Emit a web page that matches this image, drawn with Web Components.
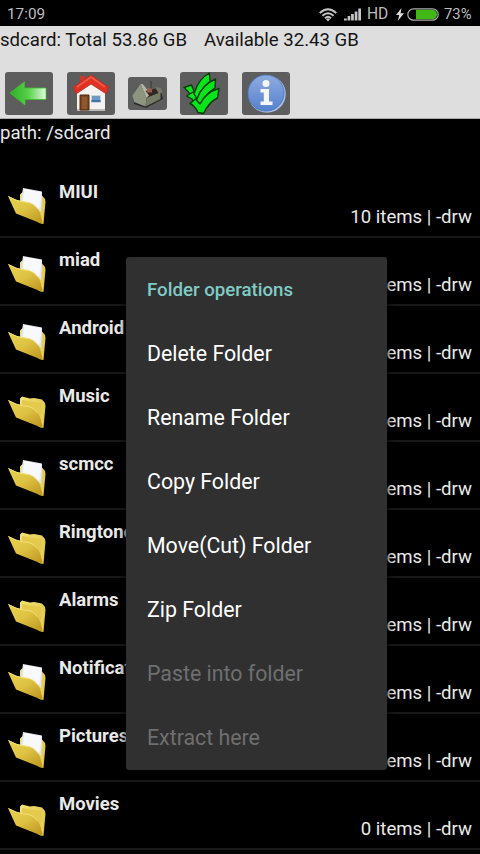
<!DOCTYPE html>
<html lang="en">
<head>
<meta charset="utf-8">
<title>File manager</title>
<style>
html,body{margin:0;background:#000}
body{width:480px;height:854px;overflow:hidden;font-family:Roboto,"Noto Sans",sans-serif}
</style>
</head>
<body>
<file-app></file-app>
<script>
const define=(name,render)=>customElements.define(name,class extends HTMLElement{
  connectedCallback(){
    if(this.shadowRoot)return;
    const t=document.createElement('template');
    t.innerHTML=render(this);
    this.attachShadow({mode:'open'}).append(t.content.cloneNode(true));
  }
});

define('status-bar',()=>`
<style>
:host{display:flex;align-items:center;box-sizing:border-box;height:26px;padding:3px 8px 0 7px;background:#000;color:#bdbdbd;font-size:15.3px;line-height:23px}
.time{flex:1}
svg{display:block;flex:none}
.wifi{margin-right:7px}.sig{margin-right:5px}.bolt{margin:0 3px 0 8px}.bat{margin-right:5px}
.hd{font-size:15.6px;width:21px}.pct{font-size:14.8px;width:28px;white-space:nowrap}
</style>
<span class="time">17:09</span>
<svg class="wifi" width="18" height="14" viewBox="0 0 18 14"><g fill="none" stroke="#c4c4c4" stroke-width="1.9"><path d="M.7 5Q9-2.6 17.3 5"/><path d="M3.4 7.8Q9 2.5 14.6 7.8"/><path d="M5.9 10.3Q9 7.2 12.1 10.3"/></g><path d="M7 11.2Q9 9.4 11 11.2L9 13.4Z" fill="#c4c4c4"/></svg>
<svg class="sig" width="18" height="13" viewBox="0 0 18 13"><g fill="#c4c4c4"><path d="M0 10.4h2.8v2.1H0zM3.6 8h2.7v4.5H3.6zM7.1 6h2.7v6.5H7.1zM10.7 3.4h2.7v9.1h-2.7zM14.3 .4h2.7v12.1h-2.7z"/></g></svg>
<span class="hd">HD</span>
<svg class="bolt" width="8" height="13" viewBox="0 0 8 13"><path d="M5.5 0 0 7.1h3.2L1.8 13 8 5.2H4.6Z" fill="#ddd"/></svg>
<svg class="bat" width="32" height="13" viewBox="0 0 32 13"><rect x=".8" y=".8" width="30.4" height="11.4" rx="5.7" fill="#050505" stroke="#aaa" stroke-width="1.2"/><path d="M9 1.8h16.3a4.7 4.7 0 0 1 0 9.4H9Z" fill="#42b817"/></svg>
<span class="pct">73%</span>`);

define('tool-button',()=>`
<style>
:host{display:flex;align-items:center;justify-content:center;width:48px;height:43px;border-radius:3px;background:#5d5d5d}
:host([small]){width:39px;height:33px}
</style><slot></slot>`);

define('storage-header',()=>`
<style>
:host{display:block;box-sizing:border-box;height:93px;background:#dedede;color:#151515;border-bottom:1px solid #aaa}
.info{height:46px;font-size:18.6px;line-height:29px;white-space:pre}
.bar{display:flex;align-items:center;padding-left:5px;height:43px}
tool-button+tool-button{margin-left:13px}
tool-button:nth-child(2),tool-button:nth-child(5){margin-left:14px}
svg{display:block}
</style>
<div class="info">sdcard: Total 53.86 GB<span style="margin-left:17px">Available 32.43 GB</span></div>
<div class="bar">
<tool-button><svg width="48" height="43" viewBox="0 0 48 43"><defs><linearGradient id="ar"><stop stop-color="#2fae26"/><stop offset=".5" stop-color="#55d148"/><stop offset="1" stop-color="#e2fae0"/></linearGradient></defs><path d="M5 21 19.5 9.8V16H41V27.5H20V33Z" fill="url(#ar)" stroke="#3cc12f" stroke-width=".8" stroke-linejoin="round"/></svg></tool-button>
<tool-button><svg width="48" height="43" viewBox="0 0 48 43"><path d="M10 17 24 6 38 17V38H10Z" fill="#f4f3f2"/><path d="M10 37h28v2H10z" fill="#bbb"/><path d="M13 4h5v6l-5 3z" fill="#c83a2c"/><path d="M24 3 6.5 15 9 22 24 12 39.5 22 41.5 15Z" fill="#e03122" stroke="#b92c20" stroke-width=".8" stroke-linejoin="round"/><path d="M10 15 24 5 38 15" fill="none" stroke="#f05a48" stroke-width="1.6"/><path d="M13 23h9v15h-9z" fill="#7d4621" stroke="#51280d"/><path d="M15 25h5v12h-5z" fill="#8f5730"/><path d="M24.5 23.5h9v7h-9z" fill="#7198c3" stroke="#c9d5df"/><path d="M24.5 28h9v2h-9z" fill="#48739f"/></svg></tool-button>
<tool-button small><svg width="39" height="33" viewBox="0 0 39 33"><path d="M5 19 13 7 19 15 32 11 35 22 18 31 6 27Z" fill="#2d2d2b"/><path d="M4.5 18.5 12.5 7 18.5 21 17.5 29.5 6 25Z" fill="#8d947f"/><path d="M12.5 7 15 7.2 22.5 17 18.5 21Z" fill="#b2b8a3"/><path d="M18.5 21 32.5 15 32.5 22 17.5 29.5Z" fill="#747c67"/><path d="M17.5 14 30 11 32 15.5 21.5 19Z" fill="#332521"/><path d="M19 11h5v4.5h-5z" fill="#9a5a4f"/><path d="M27 10 33 11 34.5 15 31 17Z" fill="#737a68"/><path d="M23 4v8" stroke="#383838"/></svg></tool-button>
<tool-button><svg width="48" height="43" viewBox="0 0 48 43"><g fill="#09e51b" stroke="#053c07" stroke-width="1.4" stroke-linejoin="round"><path d="M4 15.5 11.5 13 14.5 20.5C17 12 22 5 29.5 1L30 10C23 15 19 21 17 28L12 26 8.5 20Z"/><path d="M6.5 24 13 20 17 27C20 18 26 11 35.5 7L35 16C28 20 23 27 21 34L15 32.5 12 27Z"/><path d="M10 31.5 15.5 27 20 32C24 24 30 19 39 16.5L37.5 26C31 29 27 34 23.5 41.5L18 40.5C16 36 14 33.5 10 31.5Z"/></g></svg></tool-button>
<tool-button><svg width="48" height="43" viewBox="0 0 48 43"><defs><linearGradient id="bl" x2="0" y2="1"><stop stop-color="#8facdf"/><stop offset="1" stop-color="#5581cf"/></linearGradient></defs><circle cx="25" cy="22" r="18.8" fill="#a5bbdf"/><circle cx="24" cy="21" r="18" fill="url(#bl)" stroke="#4673bd" stroke-width=".8"/><circle cx="24" cy="11.5" r="3.5" fill="#f5f6fa"/><path d="M18.5 17h8.5v12.5h3.5V33h-12v-3.5h3.3v-9h-3.3z" fill="#f5f6fa"/></svg></tool-button>
</div>`);

define('folder-icon',el=>`
<style>:host{display:block;width:40px;height:40px}svg{display:block}</style>
<svg width="40" height="40" viewBox="0 0 40 40"><defs>
<linearGradient id="f" x2=".8" y2="1"><stop stop-color="#e9d250"/><stop offset=".5" stop-color="#dfc344"/><stop offset="1" stop-color="#c29a22"/></linearGradient>
<linearGradient id="b" x2="1" y2="1"><stop stop-color="#f2e377"/><stop offset="1" stop-color="#d9bd3b"/></linearGradient></defs>
<path d="M12 7.5 14 5.5 22 7.5 26 7 34 8.5 37 12 37.5 15 35.5 37 31 36 12 14Z" fill="url(#b)"/>
${el.hasAttribute('full')?'<path d="M15 1 34 4.5 34 13 33 25 27 19 13 14Z" fill="#e3e8ee"/><path d="M16 2 33 5 32.5 13 31 22 27 18 15 14Z" fill="#f8f9fc"/>':'<path d="M14 9 33 12 33 25 14 18Z" fill="#e4ca4c"/>'}
<path d="M0 9 Q8 13.5 16 14.5Q25 15 29 21Q34 28 34.5 37L8 26.5Q4 18 0 9Z" fill="url(#f)"/>
<path d="M.5 9.5Q8 14 16 15Q25 15 29 21.5" fill="none" stroke="#f5e887" stroke-width=".8"/>
<path d="M35.5 15 32.5 26 34.8 37Z" fill="#e6d164"/></svg>`);

define('folder-row',el=>`
<style>
:host{display:grid;grid-template-columns:51px 1fr;box-sizing:border-box;height:68px;padding:10px 8px 0 8px;border-bottom:2px solid #181818;color:#e9e9e9;font-size:18.67px;line-height:24px}
folder-icon{margin-top:7px}
.name{font-weight:700;font-size:18.5px;height:25px}
.meta{text-align:right;line-height:25px;font-size:18.6px;white-space:nowrap}
</style>
<folder-icon ${el.hasAttribute('full')?'full':''}></folder-icon>
<div><div class="name"><slot></slot></div><div class="meta">${el.getAttribute('count')} items | -drw</div></div>`);

define('menu-item',()=>`
<style>
:host{display:flex;align-items:center;box-sizing:border-box;height:64px;padding:1px 0 0 22px;color:#fff;font-size:21.33px;white-space:nowrap}
:host([heading]){color:#80cbc4;font-size:18.67px;font-weight:500}
:host([disabled]){color:#6f6f6f}
</style><slot></slot>`);

define('context-menu',()=>`
<style>:host{display:block;box-sizing:border-box;width:261px;height:513px;background:#303030;border-radius:3px;box-shadow:0 3px 8px #000}</style><slot></slot>`);

define('file-app',()=>`
<style>
:host{display:block;position:relative;width:480px;height:854px;overflow:hidden;background:#000}
.path{box-sizing:border-box;height:51px;padding-top:1px;color:#e9e9e9;font-size:18.67px;line-height:27px}
context-menu{position:absolute;left:126px;top:257px}
menu-item{margin-left:-1px}
</style>
<status-bar></status-bar>
<storage-header></storage-header>
<div class="path">path: /sdcard</div>
<main>
<folder-row full count="10">MIUI</folder-row>
<folder-row full count="1">miad</folder-row>
<folder-row full count="1">Android</folder-row>
<folder-row count="0">Music</folder-row>
<folder-row full count="1">scmcc</folder-row>
<folder-row count="0">Ringtones</folder-row>
<folder-row count="0">Alarms</folder-row>
<folder-row full count="1">Notifications</folder-row>
<folder-row full count="1">Pictures</folder-row>
<folder-row count="0">Movies</folder-row>
</main>
<context-menu>
<menu-item heading>Folder operations</menu-item>
<menu-item>Delete Folder</menu-item>
<menu-item>Rename Folder</menu-item>
<menu-item>Copy Folder</menu-item>
<menu-item>Move(Cut) Folder</menu-item>
<menu-item>Zip Folder</menu-item>
<menu-item disabled>Paste into folder</menu-item>
<menu-item disabled>Extract here</menu-item>
</context-menu>`);
</script>
</body>
</html>
